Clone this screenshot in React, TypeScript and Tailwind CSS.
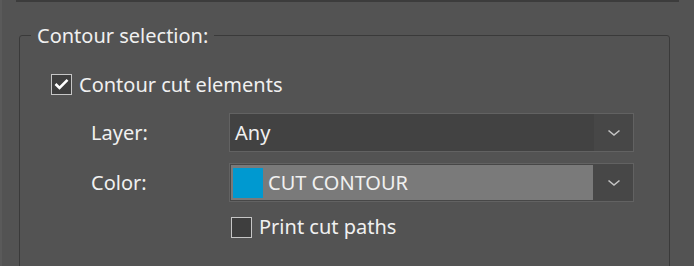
import React from 'react';

const Chevron = () => (
  <svg width="14" height="8" viewBox="0 0 14 8" fill="none">
    <path d="M1.5 1.5 L7 6 L12.5 1.5" stroke="#c4c4c4" strokeWidth="1.6" />
  </svg>
);

const CheckBox: React.FC<{ checked?: boolean }> = ({ checked }) => (
  <div className="w-[21px] h-[21px] border border-[#c6c6c6] bg-[#3e3e3e] flex items-center justify-center shrink-0">
    {checked && (
      <svg width="15" height="12" viewBox="0 0 15 12" fill="none">
        <path d="M1.5 6 L5.5 10 L13.5 1.8" stroke="#ffffff" strokeWidth="2.6" />
      </svg>
    )}
  </div>
);

const SelectBox: React.FC<{ highlighted?: boolean; children: React.ReactNode }> = ({ highlighted, children }) => (
  <div className="w-[405px] h-[39px] border border-[#626262] bg-[#474747] flex">
    <div className={`flex-1 flex items-center ${highlighted ? 'bg-[#7a7a7a] m-[1px]' : 'bg-[#424242]'}`}>{children}</div>
    <div className="w-[39px] flex items-center justify-center">
      <Chevron />
    </div>
  </div>
);

export default function App() {
  return (
    <div
      className="w-[694px] h-[266px] bg-[#535353] overflow-hidden relative text-[#f0f0f0] text-[20px]"
      style={{ fontFamily: '"Noto Sans", "Open Sans", sans-serif' }}
    >
      <div className="absolute left-0 top-0 w-[2px] h-full bg-[#5a5a5a]" />
      <div className="ml-[16px] w-[663px] h-[2px] bg-[#3c3c3c]" />

      <fieldset className="ml-[19px] mt-[19px] w-[651px] h-[300px] border border-[#3a3a3a] rounded-t-[3px]">
        <legend className="ml-[11px] px-[6px] leading-[26px] pt-[2px]">Contour selection:</legend>

        <div className="pl-[31px]">
          <div className="mt-[24px] flex items-center h-[22px]">
            <CheckBox checked />
            <span className="ml-[7px] leading-[22px] pt-[2px]">Contour cut elements</span>
          </div>

          <div className="mt-[18px] pl-[40px] grid grid-cols-[138px_405px] gap-y-[11px] items-center">
            <span>Layer:</span>
            <SelectBox>
              <span className="ml-[5px]">Any</span>
            </SelectBox>
            <span>Color:</span>
            <SelectBox highlighted>
              <div className="w-[30px] h-[30px] bg-[#0099d0] ml-[2px]" />
              <span className="ml-[5px]">CUT CONTOUR</span>
            </SelectBox>
            <span />
            <div className="flex items-center -mt-[1px] ml-[2px]">
              <CheckBox />
              <span className="ml-[7px]">Print cut paths</span>
            </div>
          </div>
        </div>
      </fieldset>
    </div>
  );
}
